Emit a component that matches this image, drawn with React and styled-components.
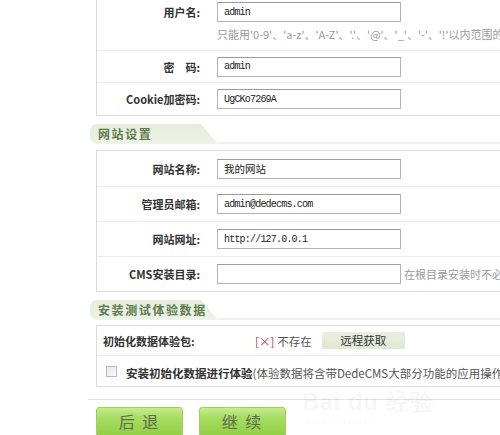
import React from 'react';
import styled, { createGlobalStyle } from 'styled-components';

const GlobalStyle = createGlobalStyle`
    html, body {
        margin: 0;
        padding: 0;
        background: #fff;
        overflow: hidden;
    }
    body {
        font-family: "Noto Sans CJK SC", "Liberation Sans", sans-serif;
        color: #333;
    }
`;

const Page = styled.div`
    position: relative;
    width: 500px;
    height: 435px;
    overflow: hidden;
    padding-left: 88px;
    box-sizing: border-box;
`;

const Panel = styled.div`
    width: 600px;
    margin-left: 8px;
    margin-top: ${ props => props.$offset || 0 }px;
    border: 1px solid #dcdcdc;
    background: #fff;
`;

const Row = styled.div`
    display: grid;
    grid-template-columns: ${ props => props.$labelWidth || 103 }px 1fr;
    align-items: ${ props => props.$top ? 'start' : 'center' };
    min-height: ${ props => props.$height || 35 }px;
    box-sizing: border-box;
    padding: ${ props => props.$top ? '9px 0 9px' : '0' };
    &:not( :first-child ) {
        border-top: 1px solid #ececec;
    }
`;

const Label = styled.div`
    font-size: 11px;
    font-weight: 700;
    color: #333;
    text-align: ${ props => props.$left ? 'left' : 'right' };
    padding-left: ${ props => props.$left ? '6px' : '0' };
    line-height: 20px;
    white-space: nowrap;
`;

const Field = styled.div`
    padding-left: ${ props => props.$pad ?? 17 }px;
    display: flex;
    flex-direction: ${ props => props.$column ? 'column' : 'row' };
    align-items: ${ props => props.$column ? 'flex-start' : 'center' };
    gap: ${ props => props.$column ? 5 : 3 }px;
`;

const TextInput = styled.input`
    width: 184px;
    height: 20px;
    box-sizing: border-box;
    border: 1px solid #b3b3b3;
    border-top-color: #9c9c9c;
    background: #fff;
    padding: 0 6px;
    margin: 0;
    font-family: ${ props => props.$cjk ? '"Noto Sans CJK SC", sans-serif' : '"Liberation Mono", monospace' };
    font-size: ${ props => props.$cjk ? '10.5px' : '10px' };
    letter-spacing: ${ props => props.$cjk ? '0' : '-0.8px' };
    color: #222;
    outline: none;
`;

const Hint = styled.span`
    font-size: 11px;
    color: #9a9a9a;
    white-space: nowrap;
    line-height: 14px;
`;

const SectionHead = styled.div`
    display: flex;
    align-items: flex-end;
    margin: ${ props => props.$margin };
    margin-left: 2px;
`;

const Tab = styled.div`
    width: 128px;
    height: 20px;
    flex: none;
    box-sizing: border-box;
    padding-left: 8px;
    border-radius: 7px 0 0 7px;
    clip-path: polygon( 0 0, 111px 0, 128px 100%, 0 100% );
    background: linear-gradient( to bottom, #e4edd9, #edf3e6 );
    font-size: 12px;
    font-weight: 700;
    letter-spacing: 1.6px;
    line-height: 20px;
    color: #5f7b52;
    white-space: nowrap;
`;

const TabLine = styled.div`
    flex: 1;
    height: 2px;
    background: #edf3e7;
`;

const Status = styled.span`
    font-size: 11.5px;
    color: #555;
    white-space: nowrap;
    margin-right: 7px;
`;

const Cross = styled.span`
    color: #c4423f;
    margin-right: 3px;
`;

const RemoteButton = styled.button`
    width: 83px;
    height: 17px;
    border: none;
    padding: 0;
    background: linear-gradient( to bottom, #e9efe0, #dfe8d3 );
    font-family: "Noto Sans CJK SC", sans-serif;
    font-size: 11.5px;
    color: #333;
    line-height: 17px;
`;

const CheckRow = styled.div`
    display: flex;
    align-items: center;
    gap: 9px;
    height: 30px;
    padding-left: 9px;
    border-top: 1px solid #ececec;
    white-space: nowrap;
`;

const Check = styled.span`
    width: 11px;
    height: 11px;
    box-sizing: border-box;
    border: 1px solid #b9b9b9;
    background: linear-gradient( to bottom right, #e8e8e8, #fafafa );
    flex: none;
`;

const CheckText = styled.span`
    font-size: 11.5px;
    font-weight: 700;
    color: #333;
`;

const CheckNote = styled.span`
    font-size: 11.5px;
    color: #555;
`;

const Separator = styled.div`
    margin-top: 12px;
    border-top: 1px solid #e2e2e2;
`;

const ButtonBar = styled.div`
    display: flex;
    gap: 16px;
    margin: 7px 0 0 8px;
`;

const BigButton = styled.button`
    display: flex;
    justify-content: center;
    align-items: flex-start;
    width: 87px;
    height: 30px;
    border: 1px solid #9fcf62;
    border-radius: 3px;
    padding: 3px 0 0;
    background: linear-gradient( to bottom, #c4ec8c 0%, #a8dc62 35%, #92cf44 100% );
    font-family: "Noto Sans CJK SC", sans-serif;
    font-size: 16px;
    line-height: 20px;
    color: #5c6d4c;
    letter-spacing: 2px;
`;

const Watermark = styled.div`
    position: absolute;
    left: 302px;
    top: 390px;
    color: rgba( 0, 0, 0, 0.05 );
    font-family: "Liberation Sans", sans-serif;
    line-height: 1;
    pointer-events: none;
`;

const MarkTitle = styled.div`
    font-size: 24px;
    font-weight: 700;
    letter-spacing: 0.5px;
    white-space: nowrap;
`;

const MarkSub = styled.div`
    font-size: 8px;
    margin-top: 4px;
    letter-spacing: 0.5px;
`;

const formRow = ( label, value, opts = {} ) => (
    <Row key={ label } $height={ opts.height }>
        <Label>{ label }:</Label>
        <Field>
            <TextInput defaultValue={ value } $cjk={ opts.cjk } readOnly />
            { opts.side && <Hint>{ opts.side }</Hint> }
        </Field>
    </Row>
);

const App = () => {
    return (
        <Page>
            <GlobalStyle />
            <Panel $offset={ -8 }>
                <Row $top $height={ 56 }>
                    <Label>用户名:</Label>
                    <Field $column>
                        <TextInput defaultValue="admin" readOnly />
                        <Hint>只能用'0-9'、'a-z'、'A-Z'、'.'、'@'、'_'、'-'、'!'以内范围的字符</Hint>
                    </Field>
                </Row>
                { formRow( '密　码', 'admin', { height: 32 } ) }
                { formRow( 'Cookie加密码', 'UgCKo7269A', { height: 33 } ) }
            </Panel>

            <SectionHead $margin="8px 0 0">
                <Tab>网站设置</Tab>
                <TabLine />
            </SectionHead>

            <Panel $offset={ 6 }>
                { formRow( '网站名称', '我的网站', { cjk: true } ) }
                { formRow( '管理员邮箱', 'admin@dedecms.com' ) }
                { formRow( '网站网址', 'http://127.0.0.1' ) }
                { formRow( 'CMS安装目录', '', { side: '在根目录安装时不必填写' } ) }
            </Panel>

            <SectionHead $margin="8px 0 0">
                <Tab>安装测试体验数据</Tab>
                <TabLine />
            </SectionHead>

            <Panel $offset={ 5 }>
                <Row $labelWidth={ 158 } $height={ 29 }>
                    <Label $left>初始化数据体验包:</Label>
                    <Field $pad={ 0 }>
                        <Status><Cross>[×]</Cross>不存在</Status>
                        <RemoteButton>远程获取</RemoteButton>
                    </Field>
                </Row>
                <CheckRow>
                    <Check />
                    <span>
                        <CheckText>安装初始化数据进行体验</CheckText>
                        <CheckNote>(体验数据将含带DedeCMS大部分功能的应用操作示例)</CheckNote>
                    </span>
                </CheckRow>
            </Panel>

            <Separator />

            <ButtonBar>
                <BigButton>后 退</BigButton>
                <BigButton>继 续</BigButton>
            </ButtonBar>

            <Watermark>
                <MarkTitle>Bai du 经验</MarkTitle>
                <MarkSub>jingyan.baidu.com</MarkSub>
            </Watermark>
        </Page>
    );
};

export default App;
